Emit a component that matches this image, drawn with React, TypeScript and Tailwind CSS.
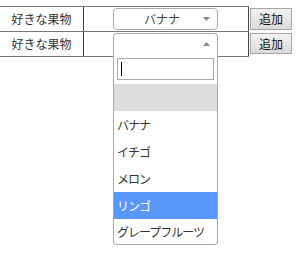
import React from 'react';

const FONT = { fontFamily: '"Noto Sans CJK JP", "Noto Sans", sans-serif' };

function Arrow({ up }: { up?: boolean }) {
  return (
    <svg width="7" height="4" viewBox="0 0 7 4" className="absolute right-[7px] top-1/2 -translate-y-1/2">
      {up ? <path d="M0 4 L3.5 0 L7 4 Z" fill="#888" /> : <path d="M0 0 L3.5 4 L7 0 Z" fill="#888" />}
    </svg>
  );
}

const options = ['バナナ', 'イチゴ', 'メロン', 'リンゴ', 'グレープフルーツ'];

export default function App() {
  return (
    <div className="w-[300px] h-[255px] bg-white text-[12px] text-[#333] relative overflow-hidden" style={FONT}>
      <div className="pt-[6px]">
        {/* row 1 */}
        <div className="flex">
          <div className="flex w-[249px] h-[26px] border-t border-b border-[#777]">
            <div className="w-[84px] border-r border-[#444] flex items-center justify-center">好きな果物</div>
            <div className="w-[165px] border-r border-[#444] flex items-center justify-center">
              <div className="relative w-[105px] h-[22px] mr-[1px] border border-[#aaa] rounded-[4px] bg-white flex items-center justify-center pr-[7px] text-[#444]">
                バナナ
                <Arrow />
              </div>
            </div>
          </div>
          <button className="ml-[1px] mt-[2px] w-[42px] h-[22px] border border-[#a5a5a5] bg-gradient-to-b from-[#f2f2f2] to-[#dadada] text-[12px] text-[#111]">
            追加
          </button>
        </div>
        {/* row 2 */}
        <div className="flex">
          <div className="flex w-[249px] h-[25px] border-b border-[#777]">
            <div className="w-[84px] border-r border-[#444] flex items-center justify-center">好きな果物</div>
            <div className="w-[165px] border-r border-[#444] relative">
              <div className="absolute left-[29px] top-[1px] w-[105px]">
                <div className="relative h-[21px] border border-b-0 border-[#aaa] rounded-t-[4px] bg-white">
                  <Arrow up />
                </div>
                <div className="border border-t-0 border-[#aaa] rounded-b-[4px] bg-white">
                  <div className="px-[3px] pt-[4px] pb-[4px]">
                    <div className="relative h-[22px] border border-[#aaa] bg-white">
                      <span className="absolute left-[3px] top-[3px] w-[1px] h-[14px] bg-black" />
                    </div>
                  </div>
                  <div className="h-[27px] bg-[#ddd]" />
                  {options.map((o, i) => (
                    <div
                      key={o}
                      className={`flex items-center pl-[3px] tracking-[-1px] ${i === options.length - 1 ? 'h-[25px]' : 'h-[27px]'} ${o === 'リンゴ' ? 'bg-[#5897fb] text-white' : 'text-[#333]'}`}
                    >
                      {o}
                    </div>
                  ))}
                </div>
              </div>
            </div>
          </div>
          <button className="ml-[1px] mt-[1px] w-[42px] h-[21px] border border-[#a5a5a5] bg-gradient-to-b from-[#f2f2f2] to-[#dadada] text-[12px] text-[#111]">
            追加
          </button>
        </div>
      </div>
    </div>
  );
}
